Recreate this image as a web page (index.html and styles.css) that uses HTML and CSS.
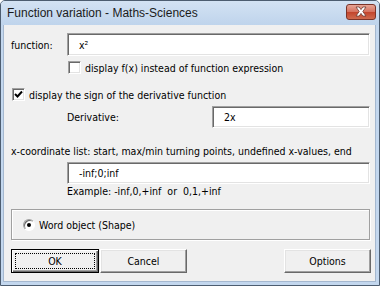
FILE: index.html
```html
<!DOCTYPE html>
<html lang="en">
<head>
  <meta charset="UTF-8">
  <title>Function variation - Maths-Sciences</title>
  <link rel="stylesheet" href="styles.css">
</head>
<body>
  <div class="window">
    <div class="titlebar">
      <span class="title">Function variation - Maths-Sciences</span>
      <div class="close-btn">
        <svg width="16" height="11" viewBox="0 0 16 11">
          <path d="M3 1 L6.2 1 L8 3.6 L9.8 1 L13 1 L9.8 5.5 L13 10 L9.8 10 L8 7.4 L6.2 10 L3 10 L6.2 5.5 Z" fill="#fff" stroke="#6b3a32" stroke-width="0.8" stroke-linejoin="round"/>
        </svg>
      </div>
    </div>

    <div class="content">
      <div class="row row-function">
        <label class="label-function">function:</label>
        <div class="textbox tb-function">x²</div>
      </div>

      <div class="row row-fx">
        <span class="checkbox"></span>
        <span>display f(x) instead of function expression</span>
      </div>

      <div class="row row-sign">
        <span class="checkbox checked">
          <svg width="9" height="9" viewBox="0 0 9 9"><path d="M1 4 L3.5 6.5 L8 1.5" fill="none" stroke="#000" stroke-width="2"/></svg>
        </span>
        <span>display the sign of the derivative function</span>
      </div>

      <div class="row row-derivative">
        <label class="label-derivative">Derivative:</label>
        <div class="textbox tb-derivative">2x</div>
      </div>

      <div class="row row-list">x-coordinate list: start, max/min turning points, undefined x-values, end</div>

      <div class="row row-xlist">
        <div class="textbox tb-xlist">-inf;0;inf</div>
      </div>

      <div class="row row-example">Example: -inf,0,+inf&nbsp; or&nbsp; 0,1,+inf</div>

      <div class="groupbox">
        <span class="radio"><span class="dot"></span></span>
        <span>Word object (Shape)</span>
      </div>

      <div class="buttons">
        <div class="button default"><span class="focus">OK</span></div>
        <div class="button">Cancel</div>
        <div class="spacer"></div>
        <div class="button">Options</div>
      </div>
    </div>
  </div>
</body>
</html>
```

FILE: styles.css
```css
body {
  margin: 0;
  background: #fff;
}
.window {
  width: 380px;
  height: 286px;
  box-sizing: border-box;
  border: 1px solid #4d5d70;
  border-radius: 5px 5px 0 0;
  background: #c3d7ee;
  display: flex;
  flex-direction: column;
}
.titlebar {
  height: 24px;
  display: flex;
  align-items: center;
  justify-content: space-between;
  padding: 0 3px 0 6px;
  background: linear-gradient(#d3e2f3, #bfd4ec);
  border-radius: 4px 4px 0 0;
}
.title {
  font-family: "Liberation Sans", sans-serif;
  font-size: 12px;
  color: #1b1b1b;
  margin-top: -1px;
}
.close-btn {
  width: 30px;
  height: 16px;
  margin-top: -3px;
  box-sizing: border-box;
  border: 1px solid #7b3328;
  border-radius: 3px;
  background: linear-gradient(#e6a596, #d5705d 50%, #c2442c 51%, #cf6a4e);
  display: flex;
  align-items: center;
  justify-content: center;
}
.content {
  flex: 1;
  margin: 0 3px 3px 2px;
  background: #f0f0f0;
  border: 1px solid #a5b8cf;
  border-top: none;
  font-family: "DejaVu Sans Condensed", "DejaVu Sans", sans-serif;
  font-size: 10.5px;
  color: #000;
}
.row {
  display: flex;
  align-items: center;
  padding-left: 7px;
}
.textbox {
  box-sizing: border-box;
  background: #fff;
  border: 1px solid;
  border-color: #a0a0a0 #fff #fff #a0a0a0;
  box-shadow: inset 1px 1px #696969, inset -1px -1px #e3e3e3;
  display: flex;
  align-items: center;
  padding-left: 11px;
}
.row-function {
  margin-top: 8px;
  height: 23px;
}
.label-function {
  width: 56px;
}
.tb-function {
  width: 303px;
  height: 23px;
}
.row-fx {
  margin-top: 5px;
  height: 13px;
  padding-left: 64px;
}
.checkbox {
  width: 13px;
  height: 13px;
  box-sizing: border-box;
  background: #fff;
  border: 1px solid;
  border-color: #a0a0a0 #fff #fff #a0a0a0;
  box-shadow: inset 1px 1px #696969, inset -1px -1px #e3e3e3;
  margin-right: 4px;
  display: flex;
  align-items: center;
  justify-content: center;
}
.row-sign {
  margin-top: 14px;
  height: 13px;
  padding-left: 8px;
}
.row-derivative {
  margin-top: 5px;
  height: 22px;
  padding-left: 63px;
}
.label-derivative {
  width: 145px;
}
.tb-derivative {
  width: 158px;
  height: 22px;
}
.row-list {
  margin-top: 16px;
  height: 14px;
}
.row-xlist {
  margin-top: 4px;
  padding-left: 63px;
}
.tb-xlist {
  width: 303px;
  height: 22px;
}
.row-example {
  height: 14px;
  padding-left: 63px;
}
.groupbox {
  margin: 11px 0 0 7px;
  width: 359px;
  height: 31px;
  box-sizing: border-box;
  border: 1px solid #a0a0a0;
  box-shadow: 1px 1px #fff, inset 1px 1px #fff;
  display: flex;
  align-items: center;
  padding-left: 11px;
}
.radio {
  width: 12px;
  height: 12px;
  box-sizing: border-box;
  border-radius: 50%;
  background: #fff;
  border: 1px solid;
  border-color: #a0a0a0 #fff #fff #a0a0a0;
  box-shadow: inset 1px 1px #696969;
  margin-right: 4px;
  display: flex;
  align-items: center;
  justify-content: center;
}
.dot {
  width: 4px;
  height: 4px;
  border-radius: 50%;
  background: #000;
}
.buttons {
  display: flex;
  margin: 9px 0 0 7px;
  width: 360px;
}
.button {
  width: 87px;
  height: 24px;
  box-sizing: border-box;
  background: #f0f0f0;
  border: 1px solid;
  border-color: #fff #696969 #696969 #fff;
  box-shadow: inset -1px -1px #a0a0a0, inset 1px 1px #e3e3e3;
  display: flex;
  align-items: center;
  justify-content: center;
}
.button.default {
  width: 88px;
  border: 1px solid #000;
  box-shadow: inset 1px 1px #fff, inset -1px -1px #696969, inset -2px -2px #a0a0a0;
  margin-right: 1px;
  padding: 3px;
}
.focus {
  flex: 1;
  align-self: stretch;
  border: 1px dotted #000;
  display: flex;
  align-items: center;
  justify-content: center;
}
.spacer {
  flex: 1;
}
```
